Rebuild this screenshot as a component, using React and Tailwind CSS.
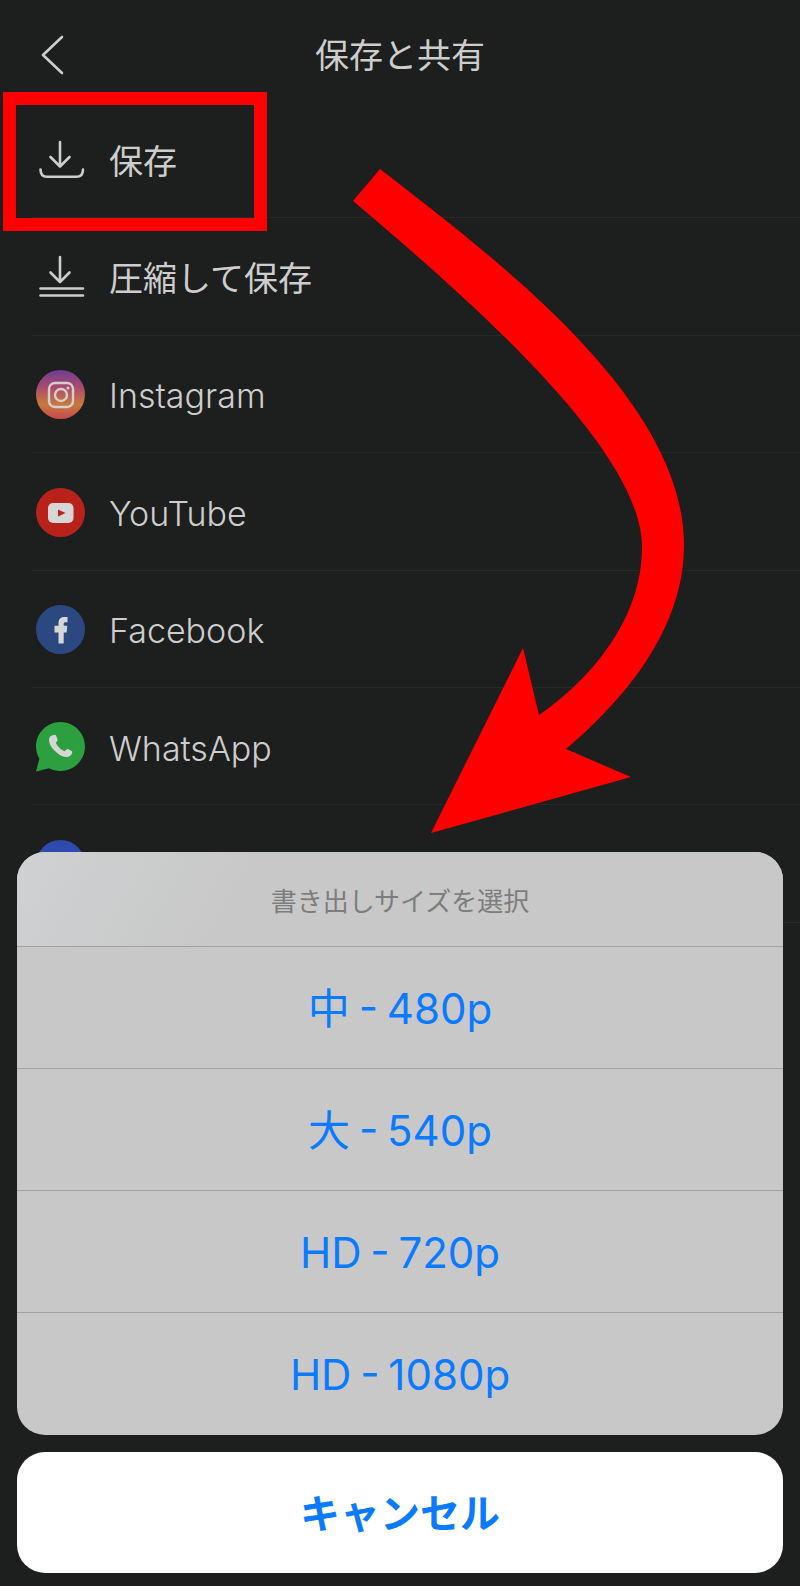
const fontStack = 'font-[Inter,"Noto_Sans_CJK_JP",sans-serif]';

function BackIcon() {
  return (
    <svg width="24" height="44" viewBox="0 0 24 44" fill="none" stroke="#cdcdcd" strokeWidth="2.6" strokeLinecap="round" strokeLinejoin="round">
      <path d="M21 4 L2 22 L21 40" />
    </svg>
  );
}

function SaveIcon() {
  return (
    <svg width="49" height="49" viewBox="0 0 49 49" fill="none" stroke="#cdcdcd" strokeWidth="2.6" strokeLinecap="round" strokeLinejoin="round">
      <path d="M24 6 V30.5 M14.5 21 L24 30.5 L33.5 21" />
      <path d="M4.5 33.5 C4.5 38.5 7 40.8 11 40.8 H40.5 C44.5 40.8 47 38.5 47 33.5" />
    </svg>
  );
}

function CompressIcon() {
  return (
    <svg width="49" height="49" viewBox="0 0 49 49" fill="none" stroke="#cdcdcd" strokeWidth="2.6" strokeLinecap="round" strokeLinejoin="round">
      <path d="M24 4 V29 M14.5 19.5 L24 29 L33.5 19.5" />
      <path d="M4.5 35.5 H47 M4.5 42.5 H47" />
    </svg>
  );
}

function InstagramIcon() {
  return (
    <svg width="49" height="49" viewBox="0 0 49 49" fill="none">
      <defs>
        <linearGradient id="ig" x1="0" y1="0" x2="0" y2="1">
          <stop offset="0" stopColor="#6d3d8f" />
          <stop offset="0.35" stopColor="#ab4a70" />
          <stop offset="0.7" stopColor="#c67a3c" />
          <stop offset="1" stopColor="#c9484f" />
        </linearGradient>
      </defs>
      <circle cx="24.5" cy="24.5" r="24.5" fill="url(#ig)" />
      <rect x="13" y="13" width="24" height="24" rx="6" stroke="#d4d0d0" strokeWidth="2.4" />
      <circle cx="25" cy="25" r="6" stroke="#d4d0d0" strokeWidth="2.4" />
      <circle cx="32" cy="18" r="1.5" fill="#d4d0d0" />
    </svg>
  );
}

function YoutubeIcon() {
  return (
    <svg width="49" height="49" viewBox="0 0 49 49">
      <circle cx="24.5" cy="24.5" r="24.5" fill="#b8221b" />
      <rect x="12" y="15" width="25.5" height="20" rx="5" fill="#d6d6d6" />
      <path d="M22 21.5 L29.5 25 L22 28.5 Z" fill="#b8221b" />
    </svg>
  );
}

function FacebookIcon() {
  return (
    <svg width="49" height="49" viewBox="0 0 49 49">
      <circle cx="24.5" cy="24.5" r="24.5" fill="#2c4880" />
      <path d="M22.5 38.5 V27.5 H18.5 V20.8 H22.5 V18 C22.5 14 24.8 12 28.3 12 H31.5 V17.2 H29.5 C28 17.2 27.7 18 27.7 19.2 V20.8 H31.3 L30.6 27.5 H27.7 V38.5 Z" fill="#d6d6d6" />
    </svg>
  );
}

function WhatsappIcon() {
  return (
    <svg width="49" height="50" viewBox="0 0 49 50">
      <path d="M24.5 0 C38 0 49 11 49 24.5 C49 38 38 49 24.5 49 C20.5 49 16.5 48 13 46.2 L0 49.5 L3.4 36.7 C1.2 33 0 28.9 0 24.5 C0 11 11 0 24.5 0 Z" fill="#2ca03f" />
      <path d="M16.5 13.2 L18.5 12.8 C19.3 12.7 19.8 13 20 13.6 L21.6 17.4 C21.8 18 21.6 18.5 21.2 19 L19.8 20.8 C21.2 24.2 24.6 27.6 28.6 29.2 L30.6 27.4 C31.1 27 31.6 26.9 32.2 27.2 L35.6 29 C36.2 29.3 36.4 29.8 36.2 30.5 C35.6 33.4 33.2 35.2 30.2 35 C22.6 34.2 13.4 25.6 13 18.2 C12.8 15.8 14.2 13.9 16.5 13.2 Z" fill="#d6d6d6" />
    </svg>
  );
}

function BlueIcon() {
  return (
    <svg width="49" height="49" viewBox="0 0 49 49">
      <circle cx="24.5" cy="24.5" r="24.5" fill="#2d4bad" />
    </svg>
  );
}

const rows = [
  { icon: <SaveIcon />, label: '保存', cjk: true },
  { icon: <CompressIcon />, label: '圧縮して保存', cjk: true },
  { icon: <InstagramIcon />, label: 'Instagram' },
  { icon: <YoutubeIcon />, label: 'YouTube' },
  { icon: <FacebookIcon />, label: 'Facebook' },
  { icon: <WhatsappIcon />, label: 'WhatsApp' },
  { icon: <BlueIcon />, label: '' },
];

const sizes = ['中 - 480p', '大 - 540p', 'HD - 720p', 'HD - 1080p'];

function App() {
  return (
    <div className={`relative w-[800px] h-[1586px] overflow-hidden bg-[#1d1e1e] text-[#cdcdcd] ${fontStack}`}>
      {/* Header */}
      <header className="relative h-[101px] flex items-center justify-center">
        <button className="absolute left-[41px] top-[33px]"><BackIcon /></button>
        <h1 className="text-[34px] mt-[10px]">保存と共有</h1>
      </header>

      {/* List */}
      <ul>
        {rows.map((row, i) => (
          <li key={i} className="h-[117.4px] ml-[32px] pl-[4px] pt-[2px] flex items-center gap-[24px] border-b border-[#272828]">
            <span className="w-[49px] flex justify-center">{row.icon}</span>
            <span className={row.cjk ? 'text-[34px] pt-[2px]' : 'text-[34px] font-[350] pt-[2px]'}>{row.label}</span>
          </li>
        ))}
      </ul>

      {/* Annotations */}
      <div className="absolute left-[3px] top-[92px] w-[264px] h-[139px] border-[13.5px] border-[#ff0000]" />
      <svg className="absolute left-0 top-0" width="800" height="1586" viewBox="0 0 800 1586">
        <path
          fill="#ff0000"
          d="M380 169 C500 262 684 400 684 545 C684 625 630 695 566 749 L631 777 L431 833 L523 648 L539 715 C590 680 642 620 642 547 C642 450 470 300 353 201 Z"
        />
      </svg>

      {/* Action sheet */}
      <div className="absolute left-[17px] top-[852px] w-[766px] flex flex-col gap-[17px]">
        <div className="h-[583px] rounded-[28px] bg-[#c8c8c8] flex flex-col overflow-hidden">
          <div className="h-[94px] pt-[4px] flex items-center justify-center text-[26px] text-[#7d7d7d] bg-[linear-gradient(120deg,#cfd1d2,#c8c8c8_30%)]">
            書き出しサイズを選択
          </div>
          {sizes.map((size) => (
            <div key={size} className="h-[122px] pt-[1px] flex items-center justify-center border-t border-[#a2a2a2] text-[42px] [word-spacing:-3px] text-[#0a7aff]">
              {size}
            </div>
          ))}
        </div>
        <button className="h-[121px] pt-[2px] rounded-[28px] bg-white text-[40px] font-bold text-[#0a7aff]">
          キャンセル
        </button>
      </div>
    </div>
  );
}

export default App;
